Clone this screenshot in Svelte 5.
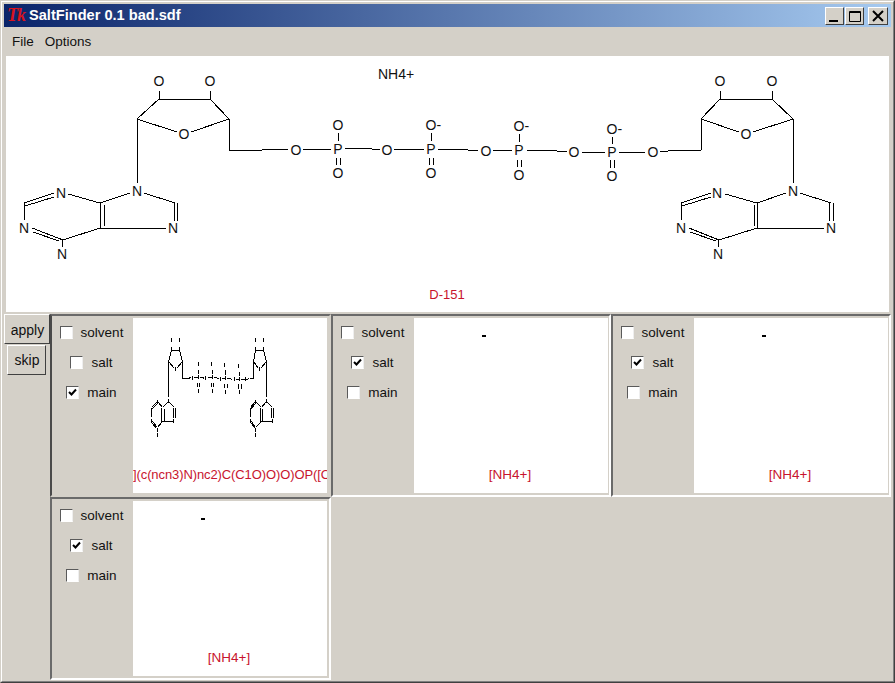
<script>
	// atoms: [label, x, y, leftAligned]
	const atoms = [
		['O', 159, 81], ['O', 210, 81], ['O', 184, 134], ['N', 137, 191],
		['N', 61, 193], ['N', 24, 228], ['N', 62, 254], ['N', 173, 228],
		['O', 296, 150], ['P', 338, 149], ['O', 338, 125], ['O', 338, 173],
		['O', 387, 150], ['P', 431, 149], ['O-', 425.5, 125, true], ['O', 431, 173],
		['O', 486, 151], ['P', 519, 150], ['O-', 513.5, 126, true], ['O', 519, 175],
		['O', 574, 152], ['P', 612, 152], ['O-', 606.5, 129, true], ['O', 612, 176],
		['O', 653, 152],
		['O', 720, 81], ['O', 772, 81], ['O', 746, 134], ['N', 793, 191],
		['N', 717, 193], ['N', 681, 228], ['N', 718, 254], ['N', 831, 228]
	];

	// bonds: [x1, y1, x2, y2, shift in the thumbnail]
	const leftBase = [
		[159, 91, 159, 99], [210, 91, 210, 99], [159, 99, 210, 99], [210, 99, 229, 119],
		[229, 119, 191, 132], [177, 132, 137, 119], [137, 119, 159, 99], [137, 119, 137, 183],
		[229, 119, 229, 150], [229, 150, 262, 150], [262, 150, 288, 149],
		[24, 203, 54, 193], [25, 206, 54, 197], [24, 203, 24, 220],
		[32, 228, 63, 240], [33, 232, 59, 241], [63, 240, 100, 228], [62, 240, 62, 247],
		[100, 203, 100, 228, -1], [104, 205, 104, 226, 1], [100, 203, 68, 194], [100, 203, 130, 193],
		[144, 193, 175, 203], [174, 203, 174, 221, -1], [177, 203, 177, 221, 1], [100, 228, 166, 228]
	];
	const rightBase = [
		[720, 91, 720, 99], [772, 91, 772, 99], [720, 99, 772, 99], [772, 99, 793, 119],
		[793, 119, 753, 132], [739, 132, 701, 119], [701, 119, 720, 99], [793, 119, 793, 183],
		[701, 119, 701, 150], [701, 150, 677, 150], [677, 150, 660, 152],
		[681, 203, 711, 193], [682, 206, 711, 197], [681, 203, 681, 220],
		[689, 228, 719, 240], [690, 232, 716, 241], [719, 240, 757, 228], [718, 240, 718, 247],
		[757, 203, 757, 228, -1], [754, 205, 754, 226, 1], [757, 203, 725, 194], [757, 203, 786, 193],
		[800, 193, 831, 203], [829, 203, 829, 221, -1], [833, 203, 833, 221, 1], [757, 228, 824, 228]
	];
	const chain = [
		[303, 149, 331, 149], [345, 148, 363, 148], [363, 148, 380, 150], [394, 149, 424, 149],
		[438, 149, 458, 149], [458, 149, 478, 151], [493, 150, 512, 150], [527, 150, 547, 150],
		[547, 150, 567, 152], [582, 152, 605, 152], [619, 152, 645, 152],
		[338, 133, 338, 141], [336, 158, 336, 165, -1], [340, 158, 340, 165, 1],
		[431, 133, 431, 141], [429, 158, 429, 165, -1], [433, 158, 433, 165, 1],
		[519, 134, 519, 142], [517, 160, 517, 167, -1], [521, 160, 521, 167, 1],
		[612, 137, 612, 144], [610, 160, 610, 168, -1], [614, 160, 614, 168, 1]
	];
	const bonds = [...leftBase, ...chain, ...rightBase];

	// the thumbnail squeezes the molecule to fit the panel
	const tx = (x) => Math.round(18 + (x - 24) * 0.15) + 0.5;
	const ty = (y) => Math.round(22 + (y - 81) * 0.55) + 0.5;

	const smiles = '](c(ncn3)N)nc2)C(C1O)O)O)OP([O-';

	const panels = [
		{ checked: 'main', thumb: true, label: smiles, cls: 'first' },
		{ checked: 'salt', label: '[NH4+]' },
		{ checked: 'salt', label: '[NH4+]' },
		{ checked: 'salt', label: '[NH4+]' }
	];
	const kinds = ['solvent', 'salt', 'main'];
</script>

<div class="window">
	<div class="frame">
		<div class="title">
			<span class="tk">Tk</span>
			<span class="title-text">SaltFinder 0.1 bad.sdf</span>
			<div class="controls">
				<button class="ctl" aria-label="minimize">
					<svg width="18" height="16" viewBox="0 0 18 16"><rect x="3" y="12" width="9" height="2" fill="#000" /></svg>
				</button>
				<button class="ctl" aria-label="maximize">
					<svg width="18" height="16" viewBox="0 0 18 16"><path d="M3.5 3.5h11v10h-11z M3 4.5h12" fill="none" stroke="#000" /></svg>
				</button>
				<button class="ctl close" aria-label="close">
					<svg width="18" height="16" viewBox="0 0 18 16"><path d="M4 3l10 10M14 3L4 13" fill="none" stroke="#000" stroke-width="2" /></svg>
				</button>
			</div>
		</div>

		<div class="menu">
			<span>File</span>
			<span>Options</span>
		</div>

		<svg class="canvas" width="883" height="256" viewBox="6 56 883 256">
			{#each bonds as b}
				<line x1={b[0]} y1={b[1]} x2={b[2]} y2={b[3]} stroke="#000" stroke-width="1" />
			{/each}
			{#each atoms as a}
				<text x={a[1]} y={a[2] + 5} text-anchor={a[3] ? 'start' : 'middle'} class="atom">{a[0]}</text>
			{/each}
			<text x="396" y="79" text-anchor="middle" class="atom">NH4+</text>
			<text x="447" y="299" text-anchor="middle" class="atom red">D-151</text>
		</svg>

		<div class="bottom">
			<div class="side">
				<button class="btn apply">apply</button>
				<button class="btn skip">skip</button>
			</div>
			<div class="grid">
				{#each panels as p}
					<div class="panel {p.cls ?? ''}">
						<div class="options">
							{#each kinds as k}
								<div class="option">
									<span class="check">
										{#if p.checked === k}
											<svg width="11" height="11" viewBox="0 0 11 11"><path d="M2 5l2.5 2.5L9 2.5" fill="none" stroke="#000" stroke-width="2" /></svg>
										{/if}
									</span>
									<span>{k}</span>
								</div>
							{/each}
						</div>
						<div class="view">
							{#if p.thumb}
								<svg class="thumb" width="194" height="145" viewBox="0 0 194 145">
									{#each bonds as b}
										<line x1={tx(b[0]) + (b[4] ?? 0)} y1={ty(b[1])} x2={tx(b[2]) + (b[4] ?? 0)} y2={ty(b[3])} stroke="#000" stroke-width="1" />
									{/each}
									{#each atoms as a}
										<rect x={tx(a[1]) - 0.5} y={ty(a[2]) - 2.5} width="1" height="4" fill="#000" />
									{/each}
								</svg>
							{:else}
								<div class="ion"><i></i></div>
							{/if}
							<div class="label" class:clip={p.thumb}>{p.label}</div>
						</div>
					</div>
				{/each}
			</div>
		</div>
	</div>
</div>

<style>
	:global(body) {
		margin: 0;
		background: #d4d0c8;
	}

	.window {
		box-sizing: border-box;
		width: 895px;
		height: 683px;
		border: 1px solid;
		border-color: #d4d0c8 #404040 #404040 #d4d0c8;
		font: 14px 'Liberation Sans', Arial, sans-serif;
		color: #111;
		overflow: hidden;
	}

	.frame {
		box-sizing: border-box;
		height: 100%;
		border: 1px solid;
		border-color: #fff #808080 #808080 #fff;
		padding: 2px 2px 1px 2px;
		background: #d4d0c8;
	}

	.title {
		height: 23px;
		display: flex;
		align-items: center;
		background: linear-gradient(90deg, #0a246a, #a6caf0);
		color: #fff;
		font-weight: bold;
		font-size: 14.6px;
	}

	.tk {
		width: 22px;
		margin-left: 3px;
		color: #d8141e;
		font: italic bold 18px 'Liberation Serif', serif;
		letter-spacing: -1px;
	}

	.title-text {
		margin-bottom: 1px;
	}

	.controls {
		margin-left: auto;
		margin-right: 3px;
		display: flex;
		gap: 1px;
	}

	.ctl {
		box-sizing: border-box;
		width: 19px;
		height: 18px;
		padding: 0;
		border: 1px solid;
		border-color: #fff #404040 #404040 #fff;
		background: #d4d0c8;
		display: block;
	}

	.ctl svg {
		display: block;
	}

	.close {
		width: 20px;
		margin-left: 3px;
	}

	.menu {
		height: 29px;
		display: flex;
		align-items: center;
		gap: 11px;
		padding-left: 8px;
		box-sizing: border-box;
		font-size: 13.5px;
		padding-bottom: 1px;
	}

	.canvas {
		display: block;
		margin: 0 2px 2px;
		background: #fff;
		shape-rendering: crispEdges;
	}

	.atom {
		font: 14px 'Liberation Sans', Arial, sans-serif;
		fill: #111;
	}

	.atom.red {
		fill: #c8142d;
		font-size: 13px;
	}

	.bottom {
		display: flex;
	}

	.side {
		width: 46px;
		display: flex;
		flex-direction: column;
		align-items: flex-end;
		gap: 1px;
	}

	.btn {
		box-sizing: border-box;
		height: 30px;
		padding: 0 0 0 1px;
		border: 1px solid;
		border-color: #fff #404040 #404040 #fff;
		background: #d4d0c8;
		font: inherit;
		color: inherit;
	}

	.apply {
		width: 46px;
		padding-top: 1px;
	}

	.skip {
		width: 39px;
		margin-right: 4px;
	}

	.grid {
		display: grid;
		grid-template-columns: 281px 280px 280px;
		grid-auto-rows: 183px;
	}

	.panel {
		box-sizing: border-box;
		display: grid;
		grid-template-columns: 81px 194px;
		align-content: start;
		padding-top: 2px;
		border: 2px solid;
		border-color: #6a6a6a #fff #fff #6a6a6a;
	}

	.panel.first {
		border-color: #6a6a6a #d4d0c8 #d4d0c8 #4a4a4a;
	}

	.options {
		display: flex;
		flex-direction: column;
		align-items: center;
		margin-top: -1px;
		padding-right: 2px;
		font-size: 13.5px;
	}

	.option {
		height: 30px;
		display: flex;
		align-items: center;
		gap: 8px;
	}

	.check {
		box-sizing: border-box;
		width: 13px;
		height: 13px;
		border: 1px solid;
		border-color: #5a5a5a #eee #fff #5a5a5a;
		background: #fff;
		display: block;
	}

	.check svg {
		display: block;
	}

	.view {
		height: 175px;
		background: #fff;
		display: flex;
		flex-direction: column;
		overflow: hidden;
	}

	.thumb {
		display: block;
		flex: none;
		shape-rendering: crispEdges;
	}

	.ion {
		height: 145px;
		flex: none;
		padding: 17px 0 0 68px;
		box-sizing: border-box;
	}

	.ion i {
		display: block;
		width: 4px;
		height: 2px;
		background: #000;
	}

	.label {
		color: #c8142d;
		text-align: center;
		font-size: 13.5px;
		line-height: 16px;
		padding: 4px 2px 0 0;
		white-space: nowrap;
	}

	.label.clip {
		text-align: left;
		font-size: 13px;
		letter-spacing: -0.1px;
		padding-right: 0;
	}
</style>
